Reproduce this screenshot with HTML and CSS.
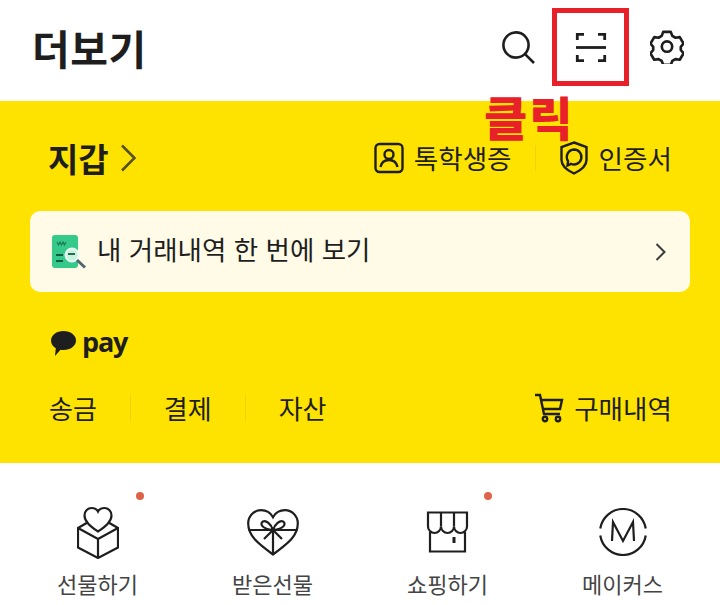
FILE: index.html
```html
<!DOCTYPE html>
<html lang="ko">
<head>
  <meta charset="UTF-8">
  <title>더보기</title>
  <link rel="stylesheet" href="styles.css">
</head>
<body>
  <div class="page">
    <header class="top-bar">
      <h1 class="top-title">더보기</h1>
      <div class="top-icons">
        <svg class="icon-search" width="33" height="33" viewBox="0 0 33 33"><circle cx="14" cy="14" r="12.6"/><path d="M23.3 23.3L32 32"/></svg>
        <svg class="icon-scan" width="32" height="29" viewBox="0 0 32 29"><path d="M2.300 7V1.300H9M23 1.300h6.700V7M2.300 22v5.700H9M23 27.700h6.700V22"/><path d="M1 14.500h30"/></svg>
        <svg class="icon-gear" width="34" height="34" viewBox="0 0 36 36"><path d="M14 2.500h8l1.600 4.200 3.400 2 4.500-.7 4 6.800-2.900 3.500v3.400l2.900 3.500-4 6.800-4.500-.7-3.400 2-1.600 4.200h-8l-1.600-4.200-3.400-2-4.500.7-4-6.800 2.900-3.500v-3.400L.5 14.800l4-6.800 4.500.7 3.400-2z" transform="translate(0 -.5)"/><circle cx="18" cy="17.500" r="5.500"/></svg>
      </div>
    </header>

    <section class="yellow">
      <div class="wallet-row">
        <div class="wallet-title">
          <span>지갑</span>
          <svg width="16" height="28" viewBox="0 0 16 28"><path d="M2 1.500L14.500 14 2 26.500"/></svg>
        </div>
        <div class="wallet-links">
          <div class="wallet-link">
            <svg width="30" height="32" viewBox="0 0 30 32"><rect x="1.500" y="2" width="27" height="28" rx="4"/><circle cx="15" cy="12.500" r="4.500"/><path d="M6.500 25c1-5 4.500-7 8.500-7s7.500 2 8.500 7"/></svg>
            <span>톡학생증</span>
          </div>
          <i class="thin-sep"></i>
          <div class="wallet-link">
            <svg width="30" height="34" viewBox="0 0 30 34"><path d="M15 1.500l12.500 4.500v13c0 6-5 10-12.500 13.500C7.500 29 2.500 25 2.500 19V6z"/><path d="M15 8.500a7.500 7.500 0 1 1-3 14.400L8.500 24.500l.6-4.300A7.500 7.500 0 0 1 15 8.500z"/></svg>
            <span>인증서</span>
          </div>
        </div>
      </div>

      <div class="history-card">
        <svg class="history-icon" width="34" height="34" viewBox="0 0 34 34">
          <rect x="0" y="0" width="26" height="33" rx="3" fill="#35c98a"/>
          <path d="M5 7l1.500 3L8 7l1.500 3L11 7l1.500 3L14 7" fill="none" stroke="#1d7a55" stroke-width="1.200"/>
          <path d="M4 20h7M4 26h7" fill="none" stroke="#145c40" stroke-width="1.800"/>
          <circle cx="20" cy="20" r="6.500" fill="#c9f3e0" stroke="#e8fff5" stroke-width="2"/>
          <path d="M16 19h7" fill="none" stroke="#145c40" stroke-width="1.800"/>
          <path d="M25 25l8 7.500" stroke="#4d6670" stroke-width="3"/>
        </svg>
        <span class="history-text">내 거래내역 한 번에 보기</span>
        <svg class="history-arrow" width="11" height="18" viewBox="0 0 11 18"><path d="M1.500 1l8 8-8 8"/></svg>
      </div>

      <div class="pay-logo">
        <svg width="25" height="25" viewBox="0 0 25 25"><path d="M12.500 0C19.500 0 25 4.200 25 9.500S19.500 19 12.500 19c-1 0-2-.1-3-.3L4 25l.8-7.800C1.900 15.500 0 12.700 0 9.500 0 4.200 5.500 0 12.500 0z" fill="#1e1e1e" stroke="none"/></svg>
        <span class="pay-word">pay</span>
      </div>

      <div class="pay-row">
        <div class="pay-tabs">
          <span>송금</span><i class="thin-sep"></i><span>결제</span><i class="thin-sep"></i><span>자산</span>
        </div>
        <div class="wallet-link">
          <svg width="30" height="30" viewBox="0 0 30 30"><path d="M1 2h5l4 19h16"/><path d="M7 7h21l-2 9H9"/><circle cx="11" cy="26" r="2.200"/><circle cx="24" cy="26" r="2.200"/></svg>
          <span>구매내역</span>
        </div>
      </div>
    </section>

    <section class="menu-grid">
      <div class="menu-item">
        <span class="dot dot-gift"></span>
        <div class="menu-icon">
          <svg width="42" height="53" viewBox="0 0 42 53"><path d="M21 25.500C14 20.500 7.500 16 7.500 9.500 7.500 5 11 2 14.500 2c3 0 5.300 1.200 6.500 3.500C22.200 3.200 24.500 2 27.500 2 31 2 34.500 5 34.500 9.500 34.500 16 28 20.500 21 25.500z"/><path d="M10.500 16.500L1 22v19.500L21 52l20-10.500V22l-9.500-5.500"/><path d="M1 22l20 11 20-11M21 33v19"/></svg>
        </div>
        <span>선물하기</span>
      </div>
      <div class="menu-item">
        <div class="menu-icon">
          <svg width="52" height="47" viewBox="0 0 52 47"><path d="M26 45.500C11 34.500 1.200 27 1.200 14.500 1.200 7 7 1.200 14 1.200c5.500 0 9.500 2.500 12 7 2.500-4.500 6.500-7 12-7 7 0 12.800 5.800 12.800 13.300C50.800 27 41 34.500 26 45.500z"/><path d="M1.500 21h49M26 21v24"/><path d="M26 21c-2-6-7-10-10-8.500-3.500 2-1.500 7.500 10 8.500zM26 21c2-6 7-10 10-8.500 3.500 2 1.500 7.500-10 8.500zM26 21l-9 9M26 21l9 9"/></svg>
        </div>
        <span>받은선물</span>
      </div>
      <div class="menu-item">
        <span class="dot dot-shop"></span>
        <div class="menu-icon">
          <svg width="43" height="42" viewBox="0 0 43 42"><path d="M2 1.500h39v14a6.500 6.500 0 0 1-13 0 6.500 6.500 0 0 1-13 0 6.500 6.500 0 0 1-13 0z"/><path d="M15 1.500v14M28 1.500v14"/><path d="M4 21v19.500h35V21"/><path class="thick" d="M28 26v6"/></svg>
        </div>
        <span>쇼핑하기</span>
      </div>
      <div class="menu-item">
        <div class="menu-icon">
          <svg width="48" height="48" viewBox="0 0 48 48"><path d="M1.270 20.500A23 23 0 0 1 46.730 20.500M46.730 27.500A23 23 0 0 1 1.270 27.500"/><path d="M13 33l1-19 10 19 10-19 1 19"/></svg>
        </div>
        <span>메이커스</span>
      </div>
    </section>

    <div class="mark-box"></div>
    <div class="mark-text">클릭</div>
  </div>
</body>
</html>
```

FILE: styles.css
```css
* {
  box-sizing: border-box;
}
html, body {
  margin: 0;
  padding: 0;
}
body {
  font-family: "Noto Sans CJK KR", "Noto Sans", sans-serif;
  color: #1e1e1e;
  background: #fff;
}
svg {
  flex: none;
  display: block;
  fill: none;
  stroke: #1e1e1e;
  stroke-width: 2;
}
.page {
  position: relative;
  width: 720px;
  height: 605px;
  overflow: hidden;
}
.top-bar {
  height: 101px;
  display: flex;
  align-items: center;
  justify-content: space-between;
  padding: 0 36px 7px 32px;
}
.top-title {
  margin: 0;
  font-size: 41px;
  font-weight: 700;
  letter-spacing: 0.5px;
  line-height: 1;
}
.top-icons {
  display: flex;
  align-items: center;
  gap: 40px;
}
.icon-search {
  stroke-width: 2.6;
}
.icon-scan {
  stroke-width: 2.8;
}
.icon-gear {
  margin-left: 3px;
  stroke-width: 2.8;
  stroke-linejoin: round;
}
.yellow {
  height: 362px;
  background: #ffe300;
  padding: 0 30px;
}
.wallet-row {
  height: 110px;
  display: flex;
  align-items: center;
  justify-content: space-between;
  padding: 4px 18px 0 18px;
}
.wallet-title {
  display: flex;
  align-items: center;
  gap: 11px;
  font-size: 33px;
  font-weight: 700;
  line-height: 1;
}
.wallet-title svg {
  stroke: #55502a;
  stroke-width: 2.6;
}
.wallet-links {
  display: flex;
  align-items: center;
  gap: 23px;
}
.wallet-link {
  display: flex;
  align-items: center;
  gap: 10px;
  font-size: 26.6px;
  line-height: 1;
}
.wallet-link svg {
  stroke-width: 2.4;
}
.thin-sep {
  display: block;
  width: 1px;
  height: 26px;
  background: #ecd406;
}
.history-card {
  height: 81px;
  display: flex;
  align-items: center;
  background: #fffbe6;
  border-radius: 10px;
  padding: 0 24px 0 22px;
}
.history-icon {
  stroke: none;
}
.history-text {
  flex: 1;
  margin-left: 11px;
  padding-bottom: 4px;
  font-size: 26.5px;
  line-height: 1;
}
.history-arrow {
  stroke: #3c3c3c;
}
.pay-logo {
  display: flex;
  align-items: center;
  gap: 6px;
  height: 44px;
  margin-top: 29px;
  padding-left: 21px;
}
.pay-word {
  padding-bottom: 4px;
  font-family: "Open Sans", sans-serif;
  font-size: 27px;
  font-weight: 700;
  letter-spacing: -1.2px;
}
.pay-row {
  display: flex;
  align-items: center;
  justify-content: space-between;
  margin-top: 28px;
  padding: 0 18px 0 19px;
}
.pay-tabs {
  display: flex;
  align-items: center;
  gap: 33px;
  font-size: 26px;
  line-height: 1;
}
.menu-grid {
  display: grid;
  grid-template-columns: repeat(4, 175px);
  padding: 42px 0 0 10px;
}
.menu-item {
  position: relative;
  display: flex;
  flex-direction: column;
  align-items: center;
  font-size: 22px;
  line-height: 30px;
  color: #444;
}
.menu-icon {
  height: 54px;
  display: flex;
  align-items: center;
  margin-bottom: 9px;
}
.menu-icon svg {
  stroke-width: 2.2;
}
.menu-icon .thick {
  stroke-width: 3;
}
.dot {
  position: absolute;
  top: -13px;
  width: 8px;
  height: 8px;
  border-radius: 50%;
  background: #dd6247;
}
.dot-gift {
  left: 126px;
}
.dot-shop {
  left: 124px;
}
.mark-box {
  position: absolute;
  left: 552px;
  top: 8px;
  width: 77px;
  height: 78px;
  border: 5px solid #e8202a;
}
.mark-text {
  position: absolute;
  left: 484px;
  top: 92px;
  font-size: 47px;
  font-weight: 900;
  letter-spacing: 2px;
  line-height: 48px;
  color: #e8202a;
}
```
